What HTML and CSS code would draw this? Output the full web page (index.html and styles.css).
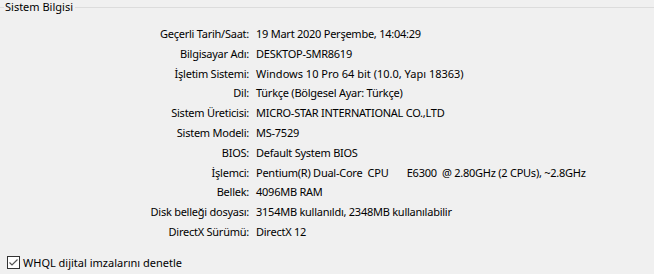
FILE: index.html
```html
<!DOCTYPE html>
<html>
<head>
<meta charset="utf-8">
<link rel="stylesheet" href="styles.css">
</head>
<body>
<div class="group">
  <div class="group-title"><span class="seg-left"></span><span class="title">Sistem Bilgisi</span><span class="seg-right"></span></div>
  <div class="info">
    <div class="lbl">Geçerli Tarih/Saat:</div><div class="val">19 Mart 2020 Perşembe, 14:04:29</div>
    <div class="lbl">Bilgisayar Adı:</div><div class="val">DESKTOP-SMR8619</div>
    <div class="lbl">İşletim Sistemi:</div><div class="val wide">Windows 10 Pro 64 bit (10.0, Yapı 18363)</div>
    <div class="lbl">Dil:</div><div class="val">Türkçe (Bölgesel Ayar: Türkçe)</div>
    <div class="lbl">Sistem Üreticisi:</div><div class="val">MICRO-STAR INTERNATIONAL CO.,LTD</div>
    <div class="lbl">Sistem Modeli:</div><div class="val">MS-7529</div>
    <div class="lbl">BIOS:</div><div class="val">Default System BIOS</div>
    <div class="lbl">İşlemci:</div><div class="val pre">Pentium(R) Dual-Core  CPU       E6300  @ 2.80GHz (2 CPUs), ~2.8GHz</div>
    <div class="lbl">Bellek:</div><div class="val">4096MB RAM</div>
    <div class="lbl">Disk belleği dosyası:</div><div class="val">3154MB kullanıldı, 2348MB kullanılabilir</div>
    <div class="lbl">DirectX Sürümü:</div><div class="val">DirectX 12</div>
  </div>
</div>
<label class="check">
  <span class="box"><svg width="11" height="11" viewBox="0 0 11 11"><path d="M1.5 5.5 L4 8 L9.5 2.5" fill="none" stroke="#555" stroke-width="1.2"/></svg></span>
  <span class="check-text">WHQL dijital imzalarını denetle</span>
</label>
</body>
</html>
```
FILE: styles.css
```css
html, body {
  margin: 0;
  padding: 0;
  background: #f0f0f0;
}
body {
  width: 654px;
  height: 274px;
  overflow: hidden;
  font-family: "Noto Sans", "DejaVu Sans", sans-serif;
  font-size: 11px;
  letter-spacing: -0.25px;
  color: #000;
}
.group-title {
  display: flex;
  align-items: center;
  height: 14px;
}
.seg-left {
  width: 4px;
  height: 1px;
  background: #dcdcdc;
}
.seg-right {
  flex: 1;
  height: 1px;
  background: #dcdcdc;
}
.title {
  padding: 0 2px 0 1px;
  line-height: 14px;
  letter-spacing: 0;
}
.info {
  display: grid;
  grid-template-columns: 249px 1fr;
  column-gap: 7px;
  margin-top: 10px;
  line-height: 19.8px;
}
.lbl {
  text-align: right;
  white-space: nowrap;
}
.val {
  white-space: nowrap;
}
.wide {
  letter-spacing: 0;
}
.pre {
  white-space: pre;
}
.check {
  display: flex;
  align-items: center;
  margin: 14px 0 0 7px;
  gap: 3px;
}
.box {
  width: 11px;
  height: 11px;
  border: 1px solid #333;
  background: #fff;
  display: flex;
}
.check-text {
  line-height: 13px;
  letter-spacing: 0;
}
```
